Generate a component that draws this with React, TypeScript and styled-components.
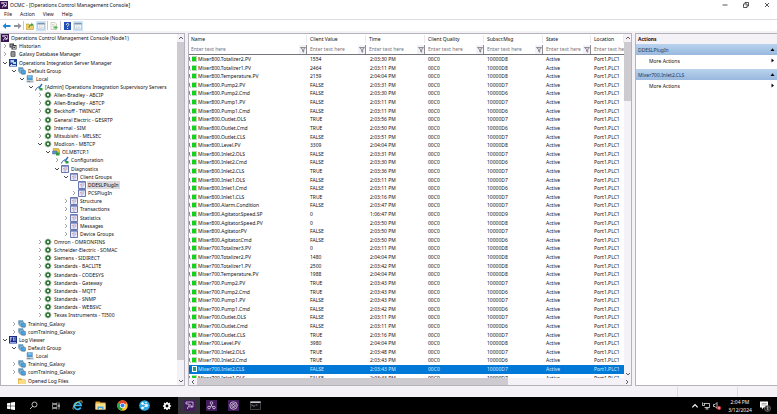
import React from 'react';
import styled, { createGlobalStyle, css } from 'styled-components';

const chrome = '#f5f2f7';
const edge = '#b4b2ba';

const GlobalStyle = createGlobalStyle`
  *, *::before, *::after { box-sizing: border-box; }
  body {
    margin: 0;
    background: #fff;
    color: #101014;
    font-family: 'Noto Sans', 'Open Sans', sans-serif;
    font-size: 5px;
    line-height: 8px;
  }
  button, input {
    margin: 0;
    padding: 0;
    border: 0;
    background: none;
    color: inherit;
    font: inherit;
  }
  svg { display: block; flex: none; }
`;

const Screen = styled.div`
  display: flex;
  flex-direction: column;
  height: 100vh;
  overflow: hidden;
`;

/* ---------- window chrome ---------- */

const TitleBar = styled.header`
  display: flex;
  align-items: center;
  gap: 2px;
  height: 9px;
`;

const Title = styled.h1`
  flex: 1;
  margin: 0;
  font-size: 5px;
  font-weight: 400;
`;

const ControlGroup = styled.div`
  display: flex;
`;

const WindowButton = styled.button`
  display: grid;
  place-items: center;
  width: 21px;
  height: 8px;
`;

const MenuBar = styled.nav`
  display: flex;
  align-items: center;
  gap: 8px;
  height: 10px;
  padding-left: 4px;
`;

const ToolBar = styled.div`
  display: flex;
  align-items: center;
  gap: 1px;
  height: 12px;
  padding-left: 1px;
  border-top: 1px solid #dedce2;
`;

const ToolButton = styled.button<{ $active?: boolean }>`
  display: grid;
  place-items: center;
  width: 10px;
  height: 10px;
  background: ${(p) => (p.$active ? '#cbe6fb' : 'transparent')};
`;

const ToolDivider = styled.span`
  width: 1px;
  height: 9px;
  background: #c9c7ce;
`;

const Workspace = styled.main`
  display: grid;
  grid-template-columns: 185px minmax(0, 1fr) 142px;
  column-gap: 3px;
  flex: 1;
  min-height: 0;
  padding: 2px 0 1px;
  background: ${chrome};
`;

const Panel = styled.section`
  display: flex;
  min-width: 0;
  min-height: 0;
  border: 1px solid ${edge};
  background: #fff;
`;

const windowControls: [string, string][] = [
  ['Minimize', 'M0.5 3h5'],
  ['Restore', 'M0.5 2h3.5v3.5H0.5zM2 2V0.5h3.5V4H4'],
  ['Close', 'M1 1l4 4M5 1l-4 4'],
];

function Controls() {
  return (
    <ControlGroup>
      {windowControls.map(([label, d]) => (
        <WindowButton key={label} aria-label={label}>
          <svg width="6" height="6" viewBox="0 0 6 6" fill="none" stroke="#2b2b30" strokeWidth="0.8">
            <path d={d} />
          </svg>
        </WindowButton>
      ))}
    </ControlGroup>
  );
}

function PaneIcon() {
  return (
    <svg width="8" height="8" viewBox="0 0 16 16" fill="none">
      <path d="M1 2h14v12H1z" fill="#fff" stroke="#9aa5ae" />
      <path d="M1 3.5h14" stroke="#7d94ab" strokeWidth="3" />
      <path d="M6 5v9M3 8h2M3 11h2M8 8h5M8 11h5" stroke="#a5b3c1" />
    </svg>
  );
}

function Tools() {
  return (
    <ToolBar role="toolbar" aria-label="Console tools">
      <ToolButton aria-label="Back">
        <svg width="9" height="8" viewBox="0 0 18 16">
          <path d="M1 8l7-6v4h9v4H8v4z" fill="#1e86d2" />
        </svg>
      </ToolButton>
      <ToolButton aria-label="Forward">
        <svg width="9" height="8" viewBox="0 0 18 16">
          <path d="M17 8l-7-6v4H2v4h8v4z" fill="#8f9399" />
        </svg>
      </ToolButton>
      <ToolDivider />
      <ToolButton aria-label="Up one level">
        <svg width="8" height="8" viewBox="0 0 16 16">
          <path d="M0 4h6l1 2h8v9H0z" fill="#f0cf6a" stroke="#b08a2e" />
          <path d="M5 12c0-5 2-7 6-8l-1-3 5 4-4 4V7c-3 0-4 2-4 5z" fill="#3fa447" />
        </svg>
      </ToolButton>
      <ToolButton aria-label="Show or hide tree" $active><PaneIcon /></ToolButton>
      <ToolDivider />
      <ToolButton aria-label="Export list">
        <svg width="8" height="8" viewBox="0 0 16 16">
          <path d="M2 1h8l3 3v11H2z" fill="#fbfaf0" stroke="#a9a998" />
          <path d="M4 5h5M4 8h5" stroke="#b5b5a5" />
          <path d="M7 9h4V7l5 4-5 4v-2H7z" fill="#5cb85f" />
        </svg>
      </ToolButton>
      <ToolDivider />
      <ToolButton aria-label="Help">
        <svg width="7" height="8" viewBox="0 0 14 16" fill="none">
          <path d="M0 0h14v16H0z" fill="#2350b4" />
          <path d="M4.5 6c0-4 5-4 5-1 0 2-2.5 2-2.5 5M7 12v2" stroke="#fff" strokeWidth="1.7" />
        </svg>
      </ToolButton>
      <ToolButton aria-label="Show or hide action pane" $active><PaneIcon /></ToolButton>
    </ToolBar>
  );
}

/* ---------- scroll bars ---------- */

const ScrollBar = styled.div<{ $horizontal?: boolean }>`
  display: flex;
  flex: none;
  flex-direction: ${(p) => (p.$horizontal ? 'row' : 'column')};
  ${(p) => (p.$horizontal ? 'height: 7px;' : 'width: 7px;')}
  background: ${chrome};
`;

const ScrollButton = styled.button`
  display: grid;
  flex: none;
  place-items: center;
  width: 8px;
  height: 8px;
  max-width: 100%;
  max-height: 100%;
`;

const ScrollTrack = styled.div<{ $horizontal?: boolean }>`
  display: flex;
  flex: 1;
  flex-direction: ${(p) => (p.$horizontal ? 'row' : 'column')};
`;

const ScrollThumb = styled.div<{ $share: number }>`
  flex: 0 0 ${(p) => p.$share}%;
  background: #cdcbd0;
`;

const arrowPaths = {
  up: 'M1 4 3 2l2 2',
  down: 'M1 2l2 2 2-2',
  left: 'M4 1 2 3l2 2',
  right: 'M2 1l2 2-2 2',
};

function Arrow({ dir, size = 6, color = '#4c4c50' }: { dir: keyof typeof arrowPaths; size?: number; color?: string }) {
  return (
    <svg width={size} height={size} viewBox="0 0 6 6" fill="none" stroke={color} strokeWidth="0.9">
      <path d={arrowPaths[dir]} />
    </svg>
  );
}

function Scroll({ share, horizontal }: { share: number; horizontal?: boolean }) {
  return (
    <ScrollBar $horizontal={horizontal}>
      <ScrollButton aria-label={horizontal ? 'Scroll left' : 'Scroll up'}>
        <Arrow dir={horizontal ? 'left' : 'up'} />
      </ScrollButton>
      <ScrollTrack $horizontal={horizontal}>
        <ScrollThumb $share={share} />
      </ScrollTrack>
      <ScrollButton aria-label={horizontal ? 'Scroll right' : 'Scroll down'}>
        <Arrow dir={horizontal ? 'right' : 'down'} />
      </ScrollButton>
    </ScrollBar>
  );
}

/* ---------- tree ---------- */

const TreeList = styled.ul`
  display: flex;
  flex: 1;
  flex-direction: column;
  min-width: 0;
  margin: 0;
  padding: 0;
  list-style: none;
`;

const TreeRow = styled.li<{ $level: number }>`
  display: flex;
  flex: 1 1 0;
  align-items: center;
  min-height: 0;
  padding-left: ${(p) => Math.round(Math.max(0, p.$level - 1) * 8.65)}px;
  white-space: nowrap;
`;

const Twisty = styled.button`
  display: grid;
  flex: none;
  place-items: center;
  width: 8px;
  height: 8px;
`;

const TreeLabel = styled.span<{ $selected?: boolean }>`
  margin-left: 1px;
  padding: 0 1px;
  background: ${(p) => (p.$selected ? '#dcdadf' : 'transparent')};
`;

type IconName =
  | 'app' | 'historian' | 'database' | 'server' | 'group' | 'local' | 'probe'
  | 'gear' | 'device' | 'grid' | 'log' | 'folder';

type TreeNode = [level: number, icon: IconName, label: string, state?: 'open' | 'closed'];

const nodes: TreeNode[] = [
  [0, 'app', 'Operations Control Management Console (Node1)'],
  [1, 'historian', 'Historian', 'closed'],
  [1, 'database', 'Galaxy Database Manager', 'closed'],
  [1, 'server', 'Operations Integration Server Manager', 'open'],
  [2, 'group', 'Default Group', 'open'],
  [3, 'local', 'Local', 'open'],
  [4, 'probe', '[Admin] Operations Integration Supervisory Servers', 'open'],
  [5, 'gear', 'Allen-Bradley - ABCIP', 'closed'],
  [5, 'gear', 'Allen-Bradley - ABTCP', 'closed'],
  [5, 'gear', 'Beckhoff - TWINCAT', 'closed'],
  [5, 'gear', 'General Electric - GESRTP', 'closed'],
  [5, 'gear', 'Internal - SIM', 'closed'],
  [5, 'gear', 'Mitsubishi - MELSEC', 'closed'],
  [5, 'gear', 'Modicon - MBTCP', 'open'],
  [6, 'device', 'OI.MBTCP.1', 'open'],
  [7, 'probe', 'Configuration', 'closed'],
  [7, 'grid', 'Diagnostics', 'open'],
  [8, 'grid', 'Client Groups', 'open'],
  [9, 'grid', 'DDESLPlugIn'],
  [9, 'grid', 'PCSPlugIn', 'closed'],
  [8, 'grid', 'Structure', 'closed'],
  [8, 'grid', 'Transactions', 'closed'],
  [8, 'grid', 'Statistics', 'closed'],
  [8, 'grid', 'Messages', 'closed'],
  [8, 'grid', 'Device Groups', 'closed'],
  [5, 'gear', 'Omron - OMRONFINS', 'closed'],
  [5, 'gear', 'Schneider-Electric - SOMAC', 'closed'],
  [5, 'gear', 'Siemens - SIDIRECT', 'closed'],
  [5, 'gear', 'Standards - BACLITE', 'closed'],
  [5, 'gear', 'Standards - CODESYS', 'closed'],
  [5, 'gear', 'Standards - Gateway', 'closed'],
  [5, 'gear', 'Standards - MQTT', 'closed'],
  [5, 'gear', 'Standards - SNMP', 'closed'],
  [5, 'gear', 'Standards - WEBSVC', 'closed'],
  [5, 'gear', 'Texas Instruments - TI500', 'closed'],
  [2, 'group', 'Training_Galaxy', 'closed'],
  [2, 'group', 'comTraining_Galaxy', 'closed'],
  [1, 'log', 'Log Viewer', 'open'],
  [2, 'group', 'Default Group', 'open'],
  [3, 'local', 'Local'],
  [2, 'group', 'Training_Galaxy', 'closed'],
  [2, 'group', 'comTraining_Galaxy', 'closed'],
  [2, 'folder', 'Opened Log Files'],
];

const gearTeeth = [0, 45, 90, 135];

function AppMark({ size = 8 }: { size?: number }) {
  return (
    <svg width={size} height={size} viewBox="0 0 16 16" fill="none">
      <rect width="16" height="16" fill="#3b1552" />
      <path d="M3 5V3h10v7H9M3 5h5v6" stroke="#dcc9ea" strokeWidth="1.4" />
      <path d="M5 13c0-3 1-4 3-4M8 6l4 4-3 1" stroke="#fff" strokeWidth="1.4" />
    </svg>
  );
}

function Gear({ size = 8, color, hole }: { size?: number; color: string; hole: string }) {
  return (
    <svg width={size} height={size} viewBox="0 0 16 16">
      <g fill={color}>
        {gearTeeth.map((a) => (
          <rect key={a} x="6.8" y="1.5" width="2.4" height="13" transform={`rotate(${a} 8 8)`} />
        ))}
        <circle cx="8" cy="8" r="4.8" />
      </g>
      <circle cx="8" cy="8" r="2.3" fill={hole} />
    </svg>
  );
}

function TreeIcon({ name }: { name: IconName }) {
  if (name === 'app') return <AppMark />;
  if (name === 'gear') return <Gear color="#2c6e33" hole="#e6f3e6" />;
  return (
    <svg width="8" height="8" viewBox="0 0 16 16" fill="none">
      {name === 'historian' && (
        <>
          <path d="M1 3h9v3h5v9H5v-4H1z" fill="#3b3b40" />
          <path d="M3 6h4M3 8h3M8 9h5v4H8z" stroke="#fff" strokeWidth="1.2" />
        </>
      )}
      {name === 'database' && (
        <>
          <path d="M3 4c0-3 10-3 10 0v8c0 3-10 3-10 0z" fill="#55555a" />
          <path d="M3 5c2 2 8 2 10 0M3 9c2 2 8 2 10 0M8 3v11" stroke="#e4e4e8" />
        </>
      )}
      {name === 'server' && (
        <>
          <rect width="16" height="15" fill="#1d3f94" />
          <path d="M3 2h7v5H3zM8 6h6v4H8z" fill="#b6d6f6" />
          <path d="M2 13h12M5 10v3" stroke="#fff" strokeWidth="1.6" />
        </>
      )}
      {name === 'group' && (
        <>
          <path d="M1 1h9v8H1z" fill="#4d9fd8" stroke="#8297a6" />
          <path d="M3 4h9v8H3z" fill="#79c2ee" stroke="#71899c" />
          <path d="M6 7h9v7H6z" fill="#4aa3e0" stroke="#5c7386" />
          <path d="M8 15.5h6" stroke="#55606a" />
        </>
      )}
      {name === 'local' && (
        <>
          <path d="M2 1h11v9H2z" fill="#3f9fe2" stroke="#7c93a6" />
          <path d="M4 3h7v2H4z" fill="#a9dcfb" />
          <path d="M1 11h14v4H1z" fill="#a8b4be" />
          <path d="M3 13h5" stroke="#506070" />
        </>
      )}
      {name === 'probe' && (
        <>
          <path d="M1 15C2 9 5 11 7 7" stroke="#27649c" strokeWidth="2" />
          <path d="M6 10 13 1l2 2-6 9z" fill="#2f6fb0" />
          <path d="M9 10h6v5H9z" fill="#2c9a3d" />
        </>
      )}
      {name === 'device' && (
        <>
          <path d="M2 1h11l2 3v7H4z" fill="#e8c33c" stroke="#a58f3c" />
          <path d="M1 6h9v6H1z" fill="#5b8fc9" stroke="#4b6b96" />
          <path d="M8 9h7v6H8z" fill="#2c9a3d" />
        </>
      )}
      {name === 'grid' && (
        <>
          <path d="M1 1h14v14H1z" fill="#e6eafa" stroke="#5a69a8" strokeWidth="1.8" />
          <path d="M2 3h12" stroke="#7f8dc6" strokeWidth="1.6" />
          <path d="M8 4v10" stroke="#8c99cf" strokeWidth="1.4" />
          <path d="M4 7h3M5 10h2M10 6h3M10 9h2" stroke="#d68583" strokeWidth="1.4" />
        </>
      )}
      {name === 'log' && (
        <>
          <rect width="16" height="15" fill="#1c2f86" />
          <path d="M3 2v9M3 3h4M3 6h3M9 2v8M12 2v8" stroke="#c4d3f8" strokeWidth="1.5" />
          <path d="M2 13h12" stroke="#8fa6ec" strokeWidth="2" />
        </>
      )}
      {name === 'folder' && (
        <>
          <path d="M0 3h6l2 2h7v9H0z" fill="#d9a637" />
          <path d="M1 6h15l-1 8H1z" fill="#fbdc83" />
        </>
      )}
    </svg>
  );
}

function Tree() {
  return (
    <Panel aria-label="Console tree">
      <TreeList>
        {nodes.map(([level, icon, label, state], i) => (
          <TreeRow key={i} $level={level}>
            {level > 0 &&
              (state ? (
                <Twisty aria-label={label} aria-expanded={state === 'open'}>
                  <Arrow
                    dir={state === 'open' ? 'down' : 'right'}
                    color={state === 'open' ? '#333' : '#97979c'}
                  />
                </Twisty>
              ) : (
                <Twisty as="span" />
              ))}
            <TreeIcon name={icon} />
            <TreeLabel $selected={label === 'DDESLPlugIn'}>{label}</TreeLabel>
          </TreeRow>
        ))}
      </TreeList>
      <Scroll share={95} />
    </Panel>
  );
}

/* ---------- tag table ---------- */

const TablePanel = styled(Panel)`
  flex-direction: column;
`;

const TableArea = styled.div`
  display: flex;
  flex: 1;
  min-height: 0;
`;

const columns = css`
  display: grid;
  grid-template-columns: 118px repeat(4, 59px) 48px minmax(0, 1fr);
`;

const Table = styled.table`
  display: flex;
  flex: 1;
  flex-direction: column;
  min-width: 0;
`;

const Head = styled.thead`
  display: block;
  border-bottom: 1px solid #77757c;
`;

const HeadRow = styled.tr`
  ${columns}
  height: 10px;
`;

const HeadCell = styled.th`
  display: flex;
  align-items: center;
  min-width: 0;
  padding: 0 0 0 3px;
  font-weight: 400;
  text-align: left;
  white-space: nowrap;
  overflow: hidden;
  &:first-child { padding-left: 2px; }
`;

const HeadLabel = styled.span`
  flex: 1;
  border-right: 1px solid #ebe9ee;
`;

const FilterInput = styled.input`
  flex: 1;
  width: 0;
  height: 8px;
  &::placeholder { color: #77757c; opacity: 1; }
`;

const FilterButton = styled.button`
  display: grid;
  flex: none;
  place-items: center;
  width: 8px;
  height: 9px;
  border-right: 1px solid #8f8d94;
  background: ${chrome};
`;

const Body = styled.tbody`
  display: grid;
  flex: 1;
  grid-template-rows: repeat(37, minmax(0, 2fr)) minmax(0, 1fr);
  min-height: 0;
  overflow: hidden;
`;

const Row = styled.tr<{ $selected?: boolean }>`
  ${columns}
  min-height: 0;
  overflow: hidden;
  color: ${(p) => (p.$selected ? '#d9ecfc' : 'inherit')};
  background: ${(p) => (p.$selected ? '#0078d7' : 'transparent')};
`;

const Cell = styled.td<{ $inset?: number }>`
  display: flex;
  align-items: center;
  height: 8px;
  min-width: 0;
  padding: 0 0 0 ${(p) => p.$inset ?? 3}px;
  white-space: nowrap;
`;

const TagName = styled.span`
  margin-left: 1px;
`;

const headings = ['Name', 'Client Value', 'Time', 'Client Quality', 'Subscr.Msg', 'State', 'Location'];

const rows = `
800.Totalizer2.PV|1554|2:03:30|D8
800.Totalizer1.PV|2464|2:03:11|D8
800.Temperature.PV|2159|2:04:04|D8
800.Pump2.PV|FALSE|2:03:31|D7
800.Pump2.Cmd|FALSE|2:03:30|D6
800.Pump1.PV|FALSE|2:03:11|D7
800.Pump1.Cmd|FALSE|2:03:11|D6
800.Outlet.OLS|TRUE|2:03:56|D7
800.Outlet.Cmd|TRUE|2:03:50|D6
800.Outlet.CLS|FALSE|2:03:51|D7
800.Level.PV|3309|2:04:04|D8
800.Inlet2.OLS|FALSE|2:03:31|D7
800.Inlet2.Cmd|FALSE|2:03:30|D6
800.Inlet2.CLS|TRUE|2:03:36|D7
800.Inlet1.OLS|FALSE|2:03:11|D7
800.Inlet1.Cmd|FALSE|2:03:11|D6
800.Inlet1.CLS|TRUE|2:03:16|D7
800.Alarm.Condition|FALSE|2:03:47|D7
800.Agitator.Speed.SP|0|1:06:47|D9
800.Agitator.Speed.PV|0|2:03:50|D8
800.Agitator.PV|FALSE|2:03:50|D7
800.Agitator.Cmd|FALSE|2:03:50|D6
700.Totalizer3.PV|0|2:03:11|D8
700.Totalizer2.PV|1480|2:04:04|D8
700.Totalizer1.PV|2500|2:03:42|D8
700.Temperature.PV|1988|2:04:04|D8
700.Pump2.PV|TRUE|2:03:43|D7
700.Pump2.Cmd|TRUE|2:03:43|D6
700.Pump1.PV|FALSE|2:03:43|D7
700.Pump1.Cmd|FALSE|2:03:42|D6
700.Outlet.OLS|FALSE|2:03:11|D7
700.Outlet.Cmd|FALSE|2:03:11|D6
700.Outlet.CLS|TRUE|2:03:16|D7
700.Level.PV|3980|2:04:04|D8
700.Inlet2.OLS|TRUE|2:03:48|D7
700.Inlet2.Cmd|TRUE|2:03:43|D6
700.Inlet2.CLS|FALSE|2:03:43|D7
700.Inlet1.OLS|FALSE|2:03:43|D7
`
  .trim()
  .split('\n')
  .map((line) => line.split('|'));

const selectedTag = '700.Inlet2.CLS';

function StatusMark({ selected }: { selected: boolean }) {
  return (
    <svg width="8" height="8" viewBox="0 0 8 8">
      <path d="M0.5 2v3l1 1.5" stroke={selected ? '#0a4f96' : '#6d6b72'} fill="none" strokeWidth="0.8" />
      <rect x="3" y="1" width="5" height="6" fill={selected ? '#fff' : '#b9d9b9'} />
      {selected ? (
        <rect x="4" y="2" width="3" height="4" fill="#1f9d7c" />
      ) : (
        <rect x="3" y="2" width="4" height="4" fill="#12d21c" />
      )}
    </svg>
  );
}

function TagTable() {
  return (
    <TablePanel aria-label="Tags">
      <TableArea>
        <Table>
          <Head>
            <HeadRow>
              {headings.map((h) => (
                <HeadCell key={h} scope="col"><HeadLabel>{h}</HeadLabel></HeadCell>
              ))}
            </HeadRow>
            <HeadRow>
              {headings.map((h, i) => (
                <HeadCell key={h} as="td">
                  <FilterInput placeholder="Enter text here" aria-label={`Filter ${h}`} />
                  {i < 6 && (
                    <FilterButton aria-label={`Filter options for ${h}`}>
                      <svg width="6" height="7" viewBox="0 0 6 7" fill="none" stroke="#55555c" strokeWidth="0.6">
                        <path d="M0.5 1.5h5L3.7 3.8v2.4L2.6 5.400V3.800z" fill="#d4d3da" />
                      </svg>
                    </FilterButton>
                  )}
                </HeadCell>
              ))}
            </HeadRow>
          </Head>
          <Body>
            {rows.map(([tag, value, time, msg]) => {
              const selected = tag === selectedTag;
              return (
                <Row key={tag} $selected={selected} aria-selected={selected}>
                  <Cell $inset={0}>
                    <StatusMark selected={selected} />
                    <TagName>Mixer{tag}</TagName>
                  </Cell>
                  <Cell>{value}</Cell>
                  <Cell $inset={4}>{time} PM</Cell>
                  <Cell>00C0</Cell>
                  <Cell>10000{msg}</Cell>
                  <Cell>Active</Cell>
                  <Cell>Port1.PLC1</Cell>
                </Row>
              );
            })}
          </Body>
        </Table>
        <Scroll share={18} />
      </TableArea>
      <Scroll horizontal share={73} />
    </TablePanel>
  );
}

/* ---------- actions ---------- */

const ActionsPanel = styled(Panel)`
  flex-direction: column;
  border-right: 0;
`;

const ActionsTitle = styled.h2`
  margin: 0;
  padding: 1px 2px;
  background: ${chrome};
  font-size: 5px;
  font-weight: 700;
`;

const ActionGroup = styled.button`
  display: flex;
  align-items: center;
  justify-content: space-between;
  height: 11px;
  padding: 0 2px;
  background: linear-gradient(#b9d3ee, #98b8dd);
  color: #1d3a5f;
`;

const ActionItem = styled.button`
  display: flex;
  align-items: center;
  justify-content: space-between;
  height: 11px;
  margin-bottom: 3px;
  padding: 0 2px 0 13px;
`;

const ActionArrow = ({ up }: { up?: boolean }) => (
  <svg width="5" height="5" viewBox="0 0 5 5" fill="#08080c">
    <path d={up ? 'M0.5 4h4L2.5 1.2z' : 'M1.5 0.5v4L4 2.5z'} />
  </svg>
);

function Actions() {
  return (
    <ActionsPanel aria-label="Actions">
      <ActionsTitle>Actions</ActionsTitle>
      {['DDESLPlugIn', 'Mixer700.Inlet2.CLS'].map((name) => (
        <React.Fragment key={name}>
          <ActionGroup>{name}<ActionArrow up /></ActionGroup>
          <ActionItem>More Actions<ActionArrow /></ActionItem>
        </React.Fragment>
      ))}
    </ActionsPanel>
  );
}

/* ---------- status bar and task bar ---------- */

const StatusBar = styled.footer`
  display: grid;
  grid-template-columns: 1fr 60px 39px;
  height: 10px;
  background: ${chrome};
`;

const StatusCell = styled.div`
  border-right: 1px solid #dedce2;
  &:last-child { border-right: 0; }
`;

const TaskBar = styled.nav`
  display: flex;
  align-items: center;
  justify-content: space-between;
  height: 17px;
  background: #000;
  color: #f0f0f4;
`;

const TaskGroup = styled.div`
  display: grid;
  grid-template-columns: repeat(12, 1fr);
  width: 267px;
  height: 17px;
`;

const TaskButton = styled.button<{ $active?: boolean }>`
  display: grid;
  place-items: center;
  background: ${(p) => (p.$active ? '#35333a' : 'transparent')};
`;

const Tray = styled.div`
  display: flex;
  align-items: center;
  gap: 3px;
  padding-right: 6px;
`;

const TrayButton = styled.button`
  display: grid;
  place-items: center;
  width: 8px;
  height: 12px;
`;

const NoticeButton = styled(TrayButton)`
  width: 12px;
`;

const Clock = styled.div`
  width: 32px;
  text-align: center;
`;

const PurpleTile = ({ children }: { children: React.ReactNode }) => (
  <svg width="11" height="11" viewBox="0 0 22 22" fill="none" stroke="#e6d5f2" strokeWidth="1.5">
    <rect width="22" height="22" fill="#431c5c" stroke="none" />
    {children}
  </svg>
);

const tasks: [string, React.ReactNode][] = [
  ['Start', (
    <svg width="8" height="8" viewBox="0 0 16 16" fill="#fff">
      <path d="M0 2.3 7 1.3v6.2H0zM8 1.2 16 0v7.5H8zM0 8.5h7v6.2l-7-1zM8 8.5h8V16l-8-1.2z" />
    </svg>
  )],
  ['Search', (
    <svg width="9" height="9" viewBox="0 0 18 18" fill="none" stroke="#e8e8ec" strokeWidth="1.6">
      <circle cx="11" cy="7" r="5" />
      <path d="M7.5 10.5 2 16" />
    </svg>
  )],
  ['Task view', (
    <svg width="8" height="8" viewBox="0 0 16 16" fill="none" stroke="#d8d8dc" strokeWidth="1.3">
      <path d="M1 5h9v6H1zM1 1v2h9V1M1 15v-2h9v2M14 1v14M13 6h3v3h-3z" />
    </svg>
  )],
  ['Internet Explorer', (
    <svg width="11" height="11" viewBox="0 0 22 22" fill="none">
      <path d="M17.5 15a7 7 0 1 1 .8-4.2H6" stroke="#35b6f2" strokeWidth="3.4" />
      <path d="M3 19C-1 17 7 5 16 2c4-1 5 1 4 4" stroke="#f4cf52" strokeWidth="1.6" />
    </svg>
  )],
  ['File Explorer', (
    <svg width="11" height="9" viewBox="0 0 22 18">
      <path d="M1 1h8l2 2h10v14H1z" fill="#e2a93a" />
      <path d="M1 5h20v12H1z" fill="#fbe08c" />
      <path d="M5 17v-6h12v6h-3v-3H8v3z" fill="#4aa6e2" />
    </svg>
  )],
  ['Chrome', (
    <svg width="11" height="11" viewBox="0 0 22 22">
      <circle cx="11" cy="11" r="10.5" fill="#f9c72e" />
      <path d="M11 11 2 5.6A10.5 10.5 0 0 1 20.3 6z" fill="#e5402f" />
      <path d="M11 11 2 5.6A10.5 10.5 0 0 0 10 21.5z" fill="#27a24c" />
      <circle cx="11" cy="11" r="5.2" fill="#fff" />
      <circle cx="11" cy="11" r="4" fill="#3a7cf0" />
    </svg>
  )],
  ['Network hub', (
    <svg width="11" height="11" viewBox="0 0 22 22" fill="#fff" stroke="#fff" strokeWidth="1.3">
      <circle cx="11" cy="11" r="10.7" fill="#2aa5e0" stroke="none" />
      <path d="M7 7l8 4-8 5" fill="none" />
      <circle cx="7" cy="7" r="2" />
      <circle cx="15" cy="11" r="2.4" />
      <circle cx="7" cy="16" r="2" />
      <circle cx="14" cy="5" r="1" />
    </svg>
  )],
  ['Settings', <Gear key="settings" size={10} color="#fff" hole="#000" />],
  ['OCMC', (
    <PurpleTile>
      <path d="M4 8V4h14v10h-4M4 8h6v7" />
      <path d="M7 18c0-4 1-5 4-5M11 8l5 5-4 1" />
    </PurpleTile>
  )],
  ['Object viewer', (
    <PurpleTile>
      <circle cx="11" cy="6" r="2.6" />
      <circle cx="6" cy="15" r="2.6" />
      <circle cx="16" cy="15" r="2.6" />
      <path d="M11 9v3l-3 2M11 12l3 2" />
    </PurpleTile>
  )],
  ['System platform', (
    <PurpleTile>
      <circle cx="11" cy="11" r="7.5" />
      <path d="M6 13c0-6 5-7 9-5M16 9c0 6-5 7-9 5M11 9c3 0 3 4 0 4s-3-4 0-4" />
    </PurpleTile>
  )],
  ['Command prompt', (
    <svg width="11" height="9" viewBox="0 0 22 18">
      <path d="M1 1h20v16H1z" fill="#0b0b0d" stroke="#7d7d82" />
      <path d="M1 1h20v3H1z" fill="#c8c8cc" />
      <path d="M3 7l2 1.5L3 10M6 10h4M11 8h4" stroke="#fff" fill="none" />
    </svg>
  )],
];

export default function App() {
  return (
    <Screen>
      <GlobalStyle />
      <TitleBar>
        <AppMark />
        <Title>OCMC - [Operations Control Management Console]</Title>
        <Controls />
      </TitleBar>
      <MenuBar>
        {['File', 'Action', 'View', 'Help'].map((m) => (
          <button key={m}>{m}</button>
        ))}
      </MenuBar>
      <Tools />
      <Workspace>
        <Tree />
        <TagTable />
        <Actions />
      </Workspace>
      <StatusBar>
        <StatusCell />
        <StatusCell />
        <StatusCell />
      </StatusBar>
      <TaskBar>
        <TaskGroup>
          {tasks.map(([label, icon]) => (
            <TaskButton key={label} aria-label={label} $active={label === 'OCMC'}>{icon}</TaskButton>
          ))}
        </TaskGroup>
        <Tray>
          <TrayButton aria-label="Show hidden icons">
            <Arrow dir="up" size={8} color="#fff" />
          </TrayButton>
          <TrayButton aria-label="Network">
            <svg width="8" height="8" viewBox="0 0 16 16" fill="none" stroke="#fff" strokeWidth="1.4">
              <path d="M3 3h12v8H5M7 14h6M10 11v3M1 1v6h4V3" />
            </svg>
          </TrayButton>
          <TrayButton aria-label="Volume muted">
            <svg width="8" height="8" viewBox="0 0 16 16" fill="none">
              <path d="M1 5h3l4-4v12L4 9H1z" stroke="#fff" strokeWidth="1.4" />
              <circle cx="12" cy="12" r="4" fill="#e8343c" />
              <path d="M10.5 10.5l3 3M13.5 10.5l-3 3" stroke="#fff" />
            </svg>
          </TrayButton>
          <Clock>
            <div>2:04 PM</div>
            <div>3/12/2024</div>
          </Clock>
          <NoticeButton aria-label="Notifications">
            <svg width="12" height="12" viewBox="0 0 24 24">
              <path d="M2 3h16v12h-9l-3 4v-4H2z" fill="#fff" />
              <path d="M5 7h10M5 10h10" stroke="#555" />
              <circle cx="17" cy="17" r="6" fill="#26262a" stroke="#a0a0a6" />
              <path d="M15.5 15l2-1.5v7" stroke="#fff" strokeWidth="1.4" fill="none" />
            </svg>
          </NoticeButton>
        </Tray>
      </TaskBar>
    </Screen>
  );
}
